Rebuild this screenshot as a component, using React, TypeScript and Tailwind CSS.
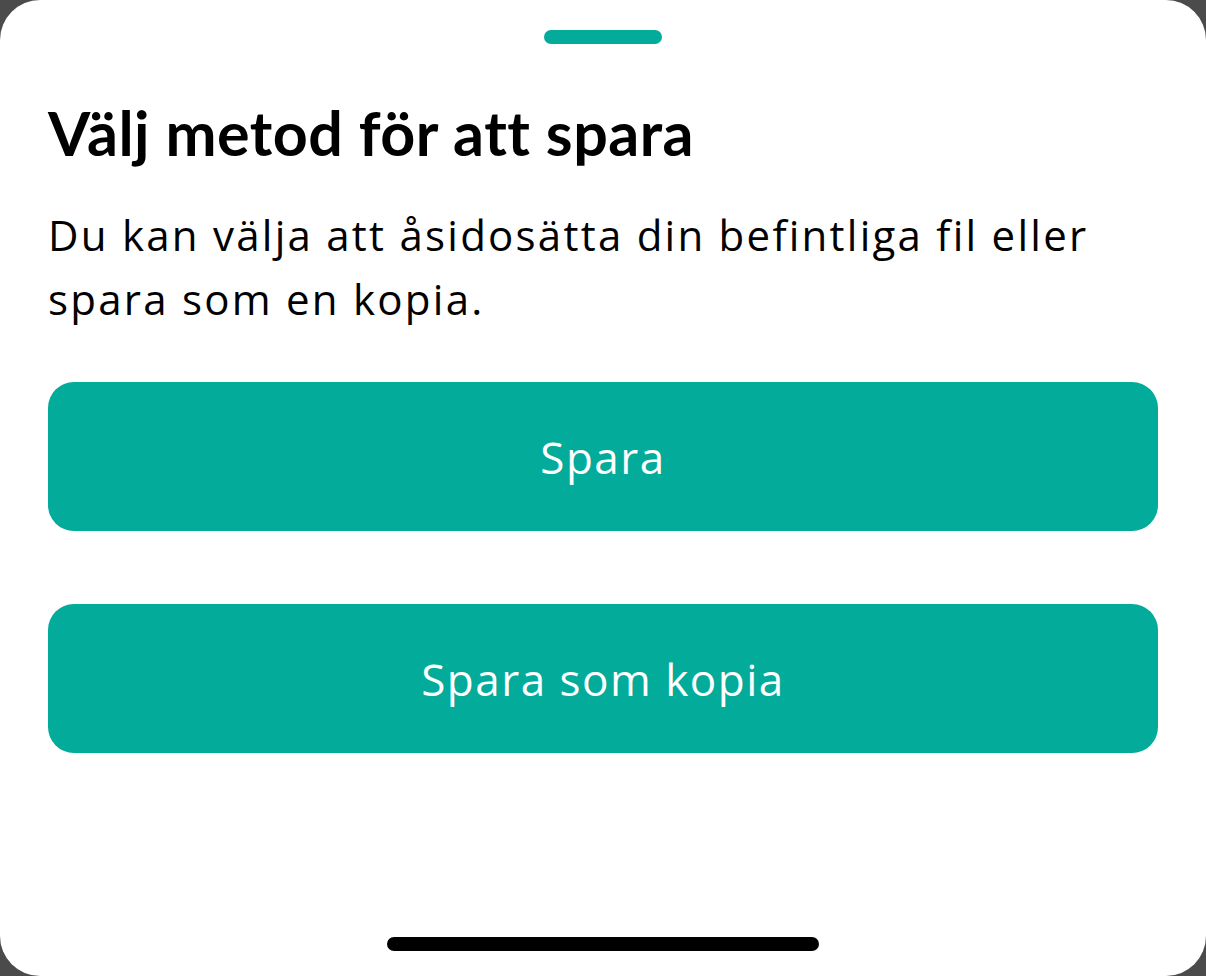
export default function App() {
  return (
    <div className="h-[976px] w-[1206px] bg-[#4b4b4b]">
      <div className="flex h-full flex-col rounded-[40px] bg-white px-12">
        <div className="flex justify-center pt-[30px]">
          <div className="h-[14px] w-[118px] rounded-full bg-[#02ab9a]" />
        </div>
        <h1 className="mt-[57px] font-['Lato',sans-serif] text-[61px] font-bold leading-[64px] tracking-[0.5px] text-black">
          Välj metod för att spara
        </h1>
        <p className="mt-[38px] font-['Open_Sans',sans-serif] text-[42px] leading-[64px] tracking-[2.25px] text-black">
          Du kan välja att åsidosätta din befintliga fil eller spara som en kopia.
        </p>
        <div className="mt-[51px] flex flex-col gap-[73px] font-['Open_Sans',sans-serif]">
          <button className="h-[149px] rounded-[26px] bg-[#02ab9a] text-[44px] tracking-[1.5px] text-white">Spara</button>
          <button className="h-[149px] rounded-[26px] bg-[#02ab9a] text-[44px] tracking-[1.5px] text-white">
            Spara som kopia
          </button>
        </div>
        <div className="mt-auto flex justify-center pb-[25px]">
          <div className="h-[14px] w-[432px] rounded-full bg-black" />
        </div>
      </div>
    </div>
  );
}
